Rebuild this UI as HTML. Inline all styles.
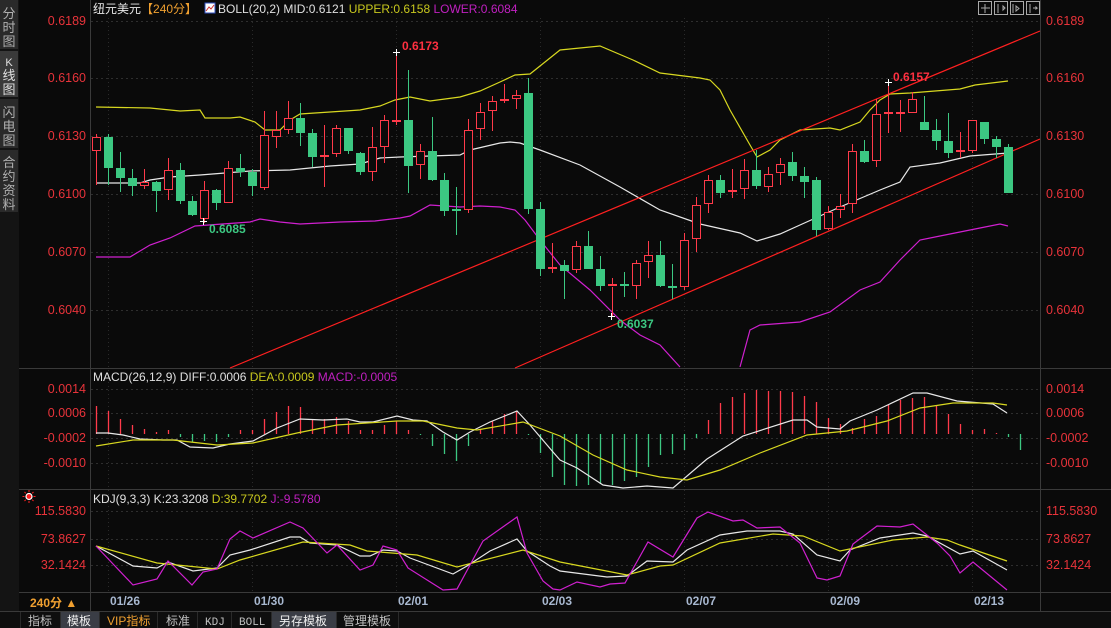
<!DOCTYPE html>
<html><head><meta charset="utf-8"><style>
html,body{margin:0;padding:0;background:#0a0a0a;width:1111px;height:628px;overflow:hidden;font-family:"Liberation Sans","Noto Sans CJK SC",sans-serif}
svg{position:absolute;left:0;top:0}
</style></head><body>
<svg id="s" width="1111" height="628" xmlns="http://www.w3.org/2000/svg" font-family="Liberation Sans, Noto Sans CJK SC, sans-serif">
<rect width="1111" height="628" fill="#0a0a0a"/>
<!-- sidebar -->
<rect x="0" y="0" width="19" height="611" fill="#141414"/>
<rect x="0" y="0" width="18" height="49" fill="#2a2a2a"/>
<rect x="0" y="51" width="18" height="46" fill="#3a3a3a"/>
<rect x="0" y="99" width="18" height="49" fill="#2a2a2a"/>
<rect x="0" y="150" width="18" height="62" fill="#2a2a2a"/>
<g fill="#b0b0b0" font-size="13" text-anchor="middle">
<text x="9" y="18">分</text><text x="9" y="32">时</text><text x="9" y="46">图</text>
<text x="9" y="66" fill="#e0e0e0" font-size="11">K</text><text x="9" y="80" fill="#e0e0e0">线</text><text x="9" y="94" fill="#e0e0e0">图</text>
<text x="9" y="117">闪</text><text x="9" y="131">电</text><text x="9" y="145">图</text>
<text x="9" y="167">合</text><text x="9" y="181">约</text><text x="9" y="195">资</text><text x="9" y="209">料</text>
</g>
<g id="grid"></g>
<!-- frame lines -->
<g stroke="#3a3a3a" stroke-width="1">
<line x1="90.5" y1="0" x2="90.5" y2="611"/>
<line x1="1040.5" y1="0" x2="1040.5" y2="611"/>
<line x1="19" y1="368.5" x2="1111" y2="368.5"/>
<line x1="19" y1="489.5" x2="1111" y2="489.5"/>
<line x1="19" y1="592.5" x2="1111" y2="592.5"/>
<line x1="0" y1="611.5" x2="1111" y2="611.5"/>
</g>
<g id="plot"></g>
<!-- header -->
<text x="93" y="13" font-size="12" fill="#e8e8e8">纽元美元<tspan fill="#f0a030">【240分】</tspan></text>
<rect x="205" y="3" width="10" height="10" fill="#fff" stroke="#3050c0"/>
<polyline points="206,11 209,7 211,9 214,5" fill="none" stroke="#d03030"/>
<text x="218" y="13" font-size="12" fill="#e0e0e0">BOLL(20,2) MID:0.6121 <tspan fill="#c8c81e">UPPER:0.6158</tspan> <tspan fill="#c020c0">LOWER:0.6084</tspan></text>
<g fill="none" stroke="#aaa">
<rect x="978.5" y="1.5" width="13" height="13"/><rect x="994.5" y="1.5" width="13" height="13"/><rect x="1010.5" y="1.5" width="13" height="13"/><rect x="1026.5" y="1.5" width="13" height="13"/>
<path d="M985 4v9M981 8h9M998 4v9M1003 6v4l2-2zM1013 4v9M1016 6v5l3-2.5zM1030 4v9M1033 8h4l-1.5-1.5M1037 8l-1.5 1.5"/>
</g>
<!-- axis labels -->
<g font-size="12.5" fill="#e8333a" text-anchor="end">
<text x="86" y="25">0.6189</text><text x="86" y="82">0.6160</text><text x="86" y="140">0.6130</text><text x="86" y="198">0.6100</text><text x="86" y="256">0.6070</text><text x="86" y="314">0.6040</text>
<text x="86" y="393">0.0014</text><text x="86" y="417">0.0006</text><text x="86" y="442">-0.0002</text><text x="86" y="467">-0.0010</text>
<text x="86" y="515">115.5830</text><text x="86" y="543">73.8627</text><text x="86" y="569">32.1424</text>
</g>
<g font-size="12.5" fill="#e8333a">
<text x="1046" y="25">0.6189</text><text x="1046" y="82">0.6160</text><text x="1046" y="140">0.6130</text><text x="1046" y="198">0.6100</text><text x="1046" y="256">0.6070</text><text x="1046" y="314">0.6040</text>
<text x="1046" y="393">0.0014</text><text x="1046" y="417">0.0006</text><text x="1046" y="442">-0.0002</text><text x="1046" y="467">-0.0010</text>
<text x="1046" y="515">115.5830</text><text x="1046" y="543">73.8627</text><text x="1046" y="569">32.1424</text>
</g>
<!-- KDJ icon -->
<circle cx="29" cy="496.5" r="3" fill="#ff2020" stroke="#fff" stroke-width="1.2"/>
<g stroke="#ff2020" stroke-width="1"><path d="M29 490v2M29 501v2M22.5 496.5h2M33.5 496.5h2M24.5 492l1.3 1.3M33.5 492l-1.3 1.3M24.5 501l1.3-1.3M33.5 501l-1.3-1.3"/></g>
<text x="93" y="381" font-size="12" fill="#e0e0e0">MACD(26,12,9) DIFF:0.0006 <tspan fill="#c8c81e">DEA:0.0009</tspan> <tspan fill="#c020c0">MACD:-0.0005</tspan></text>
<text x="93" y="503" font-size="12" fill="#e0e0e0">KDJ(9,3,3) K:23.3208 <tspan fill="#c8c81e">D:39.7702</tspan> <tspan fill="#c020c0">J:-9.5780</tspan></text>
<!-- annotations -->
<g font-size="12" font-weight="bold">
<text x="402" y="50" fill="#ff3040">0.6173</text>
<text x="893" y="81" fill="#ff3040">0.6157</text>
<text x="209" y="233" fill="#3cc882">0.6085</text>
<text x="617" y="328" fill="#3cc882">0.6037</text>
</g>
<g stroke="#fff" stroke-width="1"><path d="M393 52.5h7M396.5 49v7M200 221.5h7M203.5 218v7M608 316.5h7M611.5 313v7M885 82.5h7M888.5 79v7"/></g>
<!-- date axis -->
<text x="30" y="607" font-size="12" font-weight="bold" fill="#f0a030">240分 ▲</text>
<g font-size="12" font-weight="bold" fill="#a8b8d0">
<text x="110" y="605">01/26</text><text x="254" y="605">01/30</text><text x="398" y="605">02/01</text><text x="542" y="605">02/03</text><text x="686" y="605">02/07</text><text x="830" y="605">02/09</text><text x="974" y="605">02/13</text>
</g>
<!-- tabs -->
<rect x="0" y="612" width="1111" height="16" fill="#0e0e0e"/>
<rect x="60" y="612" width="39" height="16" fill="#3a3d45"/>
<rect x="271" y="612" width="65" height="16" fill="#3a3d45"/>
<g stroke="#2a2a2a"><path d="M20.5 612v16M60.5 612v16M99.5 612v16M157.5 612v16M197.5 612v16M231.5 612v16M271.5 612v16M336.5 612v16M398.5 612v16"/></g>
<g font-size="12" fill="#c0c0c0">
<text x="28" y="625">指标</text><text x="67" y="625" fill="#f0f0f0">模板</text><text x="107" y="625" fill="#f0a030">VIP指标</text><text x="166" y="625">标准</text><text x="205" y="625" font-family="Liberation Mono" font-size="11">KDJ</text><text x="239" y="625" font-family="Liberation Mono" font-size="11">BOLL</text><text x="279" y="625" fill="#f0f0f0">另存模板</text><text x="343" y="625">管理模板</text>
</g>
</svg>
<script>
var NS="http://www.w3.org/2000/svg";
function X(i){return 96+12*i}
var g="",p="";
// grid
[21,78,136,194,252,310,389,413,438,463,511,539,565].forEach(function(y){g+='<line x1="91" y1="'+(y+.5)+'" x2="1040" y2="'+(y+.5)+'" stroke="#2e2e2e" stroke-dasharray="2,3"/>';});
[108,252,396,540,684,828,972].forEach(function(x){g+='<line x1="'+(x+.5)+'" y1="18" x2="'+(x+.5)+'" y2="592" stroke="#2a2a2a" stroke-dasharray="1,3"/>';});
document.getElementById("grid").innerHTML=g;
function pl(pts,c){return '<polyline fill="none" stroke="'+c+'" stroke-width="1.2" points="'+pts+'"/>';}
// BOLL
p+=pl("96,107 150,108 180,111 200,110 205,118 230,118 240,117 255,122 265,130 280,130 290,120 300,114 330,112 360,110 380,106 395,100 410,97 430,101 460,97 480,91 500,82 515,75 530,74 545,62 560,50 600,46 633,60 660,73 700,78 710,80 720,90 730,110 750,145 757,157 770,150 780,140 800,130 830,128 840,130 860,122 870,110 880,100 890,94 910,93 960,89 975,85 1008,81","#d8d820");
p+=pl("96,183 140,183 150,180 170,177 200,175 250,171 290,170 330,166 360,164 380,158 400,157 460,155 470,150 500,143 510,142 520,143 540,150 580,165 620,187 660,210 700,224 740,233 757,241 780,234 800,225 840,207 880,190 900,182 910,167 940,163 970,156 1008,153","#e8e8e8");
p+=pl("96,257 130,257 150,245 170,238 195,226 250,222 260,219 280,222 300,224 340,222 375,221 400,218 410,216 430,205 460,207 480,206 500,207 515,210 525,220 540,240 560,265 590,290 620,320 640,335 660,345 680,367","#d020d0");
p+=pl("740,367 750,330 760,325 800,322 830,312 860,290 880,282 900,260 920,240 940,236 980,228 1000,224 1008,226","#d020d0");
// trend lines
p+='<line x1="230" y1="368" x2="1040" y2="31" stroke="#ff2020" stroke-width="1.2"/>';
p+='<line x1="515" y1="368" x2="1040" y2="139" stroke="#ff2020" stroke-width="1.2"/>';
// candles
var C="r137 151 134 185;g137 168 134 185;g168 178 152 192;g178 186 169 196;r182 186 169 189;g182 191 181 212;r170 190 158 200;g170 201 163 204;g201 215 196 216;r190 219 181 223;g190 203 189 210;r168 203 161 203;g168 172 154 177;g172 186 169 196;r135 188 111 190;r130 137 111 148;r118 130 101 134;g118 133 103 146;g133 157 129 167;r155 157 125 187;r128 154 125 157;g128 151 128 154;g153 172 152 175;r147 172 127 181;r120 147 115 163;r120 122 52 125;g120 166 70 193;r151 165 144 179;g151 180 117 181;g180 211 173 216;g209 211 187 235;r130 210 119 213;r112 129 103 140;r101 111 96 131;r99 101 84 103;r95 99 90 109;g93 209 78 214;g209 269 202 276;r267 269 243 273;g265 271 260 299;r246 270 241 273;g246 269 231 269;g269 286 256 291;r284 287 278 316;g284 286 272 297;r263 286 260 299;r255 262 241 278;g255 286 241 287;g286 288 264 299;r240 287 233 290;r205 239 197 252;r180 204 175 213;g180 193 175 198;r190 192 169 198;r170 189 159 199;g170 186 150 189;r174 187 167 192;r164 173 158 185;g162 176 152 181;g176 182 167 198;g180 230 177 236;r212 229 206 230;r206 210 194 218;r151 204 144 213;g151 162 140 163;r114 161 99 167;r112 114 82 133;r112 114 100 132;r99 113 92 113;g122 130 96 130;g130 141 119 150;g141 153 113 158;r150 152 132 158;r120 151 120 153;g122 139 122 144;g139 147 136 158;g147 193 144 193".split(";");
C.forEach(function(s,i){var c=s[0],v=s.slice(1).split(" ").map(Number),x=X(i);
 var col=c=="r"?"#ff3a4a":"#3cc882";
 if(c=="r"){p+='<line x1="'+(x+.5)+'" y1="'+v[2]+'" x2="'+(x+.5)+'" y2="'+v[0]+'" stroke="'+col+'"/>';p+='<line x1="'+(x+.5)+'" y1="'+v[1]+'" x2="'+(x+.5)+'" y2="'+v[3]+'" stroke="'+col+'"/>';
  if(v[1]-v[0]<=3)p+='<rect x="'+(x-4)+'" y="'+v[0]+'" width="9" height="2" fill="'+col+'"/>';
  else p+='<rect x="'+(x-3.5)+'" y="'+(v[0]+.5)+'" width="8" height="'+(v[1]-v[0]-1)+'" fill="#0a0a0a" stroke="'+col+'"/>';}
 else{p+='<line x1="'+(x+.5)+'" y1="'+v[2]+'" x2="'+(x+.5)+'" y2="'+v[3]+'" stroke="'+col+'"/>';
  p+='<rect x="'+(x-4)+'" y="'+v[0]+'" width="9" height="'+Math.max(2,v[1]-v[0])+'" fill="'+col+'"/>';}
});
// MACD bars
var M=[406,411,419,425,429,432,430,437,442,441,442,437,430,430,419,412,406,407,419,419,417,421,430,430,425,421,430,435,446,454,461,446,430,421,414,411,435,453,477,485,486,485,484,485,481,477,467,455,454,450,438,420,403,397,393,390,391,391,392,396,402,418,424,428,419,416,405,400,398,397,405,414,424,430,429,433,437,450];
var B=434;
M.forEach(function(t,i){var x=X(i)+.5;var up=t<B;p+='<line x1="'+x+'" y1="'+B+'" x2="'+x+'" y2="'+t+'" stroke="'+(up?"#ff3a4a":"#3cc882")+'" stroke-width="1.3"/>';});
p+=pl("96,433 108,433 123,435 140,439 163,440 177,440 190,447 213,448 230,444 253,441 277,428 300,419 323,420 347,419 360,422 373,422 397,416 413,420 427,421 443,432 457,440 470,432 490,422 517,411 530,425 553,452 560,460 577,468 603,485 623,488 647,486 673,488 707,459 743,436 793,420 807,420 817,427 840,429 850,421 877,410 913,393 927,393 957,401 993,404 1007,413","#e8e8e8");
p+=pl("96,446 133,440 173,440 217,445 253,443 297,433 337,425 397,421 423,421 457,428 477,430 523,422 560,436 593,455 627,470 660,477 687,480 720,470 760,453 807,435 847,431 887,421 920,408 953,403 993,403 1007,405","#d8d820");
// KDJ
p+=pl("96,546 133,566 157,568 168,562 193,571 217,568 230,555 250,550 290,537 300,537 310,543 337,545 360,556 370,556 383,550 397,551 410,558 453,574 467,566 490,551 517,539 527,551 550,566 560,571 607,577 627,576 647,561 673,562 687,550 720,535 747,531 780,531 793,534 817,555 840,561 850,550 880,538 913,533 927,536 960,554 973,551 1007,570","#e8e8e8");
p+=pl("96,546 157,563 217,569 240,560 303,542 350,545 367,551 417,555 457,567 523,550 560,562 627,575 660,566 673,565 720,543 773,534 803,536 840,551 893,540 927,537 947,540 960,545 1007,561","#d8d820");
p+=pl("96,546 133,585 157,579 168,561 192,585 203,572 217,569 230,539 240,531 253,538 290,522 303,528 327,553 337,545 360,570 373,565 383,546 397,550 408,568 443,590 457,589 483,541 517,517 527,553 543,581 553,589 560,590 577,582 600,587 610,584 625,583 648,542 673,557 697,518 708,512 733,521 743,520 757,528 780,527 800,543 817,578 827,580 840,576 853,544 877,526 900,527 913,524 937,543 950,556 960,573 973,562 1007,590","#d020d0");
document.getElementById("plot").innerHTML=p;
</script>
</body></html>
